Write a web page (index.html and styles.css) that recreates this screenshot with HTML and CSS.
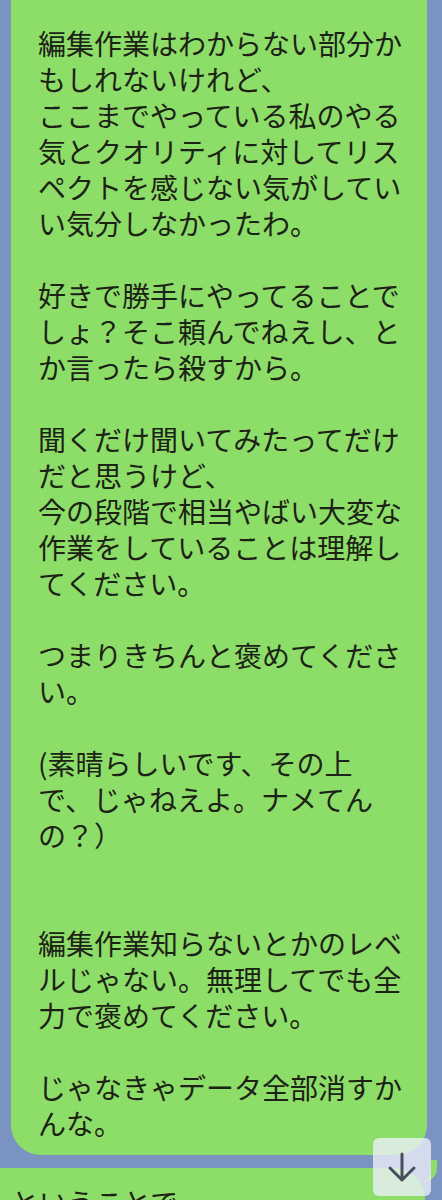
FILE: index.html
```html
<!DOCTYPE html>
<html lang="ja">
<head>
<meta charset="utf-8">
<title>トーク</title>
<link rel="stylesheet" href="styles.css">
</head>
<body>

<div class="talk">
  <div class="bubble mine">
    <p class="text">編集作業はわからない部分かもしれないけれど、
ここまでやっている私のやる気とクオリティに対してリスペクトを感じない気がしていい気分しなかったわ。

好きで勝手にやってることでしょ？そこ頼んでねえし、とか言ったら殺すから。

聞くだけ聞いてみたってだけだと思うけど、
今の段階で相当やばい大変な作業をしていることは理解してください。

つまりきちんと褒めてください。

(素晴らしいです、その上で、じゃねえよ。ナメてんの？）


編集作業知らないとかのレベルじゃない。無理してでも全力で褒めてください。

じゃなきゃデータ全部消すかんな。</p>
  </div>

  <div class="bubble mine next">
    <p class="text">ということで</p>
  </div>
</div>

<button class="scroll-down" type="button">
  <svg width="58" height="58" viewBox="0 0 58 58">
    <path d="M29 16 V42 M17 30 L29 42 L41 30" fill="none" stroke="#474d5c" stroke-width="3" stroke-linecap="round" stroke-linejoin="round"/>
  </svg>
</button>

</body>
</html>
```

FILE: styles.css
```css
body { margin: 0; background: #7b93c1; font-family: "Noto Sans CJK JP", "Noto Sans", sans-serif; overflow: hidden; }
.talk { display: flex; flex-direction: column; gap: 13px; }
.bubble { background: #8ddd69; border-radius: 30px; position: relative; }
.mine { margin-left: 11px; width: 364px; margin-top: -30px; padding: 55px 25px 14px 27px; }
.text { margin: 0; font-size: 28px; line-height: 36px; color: #1c2215; white-space: pre-line; }
.next { margin-top: 0; margin-left: -16px; width: 389px; padding-top: 16px; border-radius: 14px 30px 30px 30px; }
/* tail sticking out at the top right of my messages */
.next::after { content: ""; position: absolute; top: -8px; right: -12px; width: 16px; height: 22px; border-right: 6px solid #8ddd69; border-radius: 0 0 14px 0; }
.scroll-down { position: fixed; right: 11px; bottom: 4px; width: 58px; height: 58px; padding: 0; border: 0; border-radius: 6px; background: rgba(236, 240, 250, 0.78); }
.scroll-down svg { display: block; }
```
